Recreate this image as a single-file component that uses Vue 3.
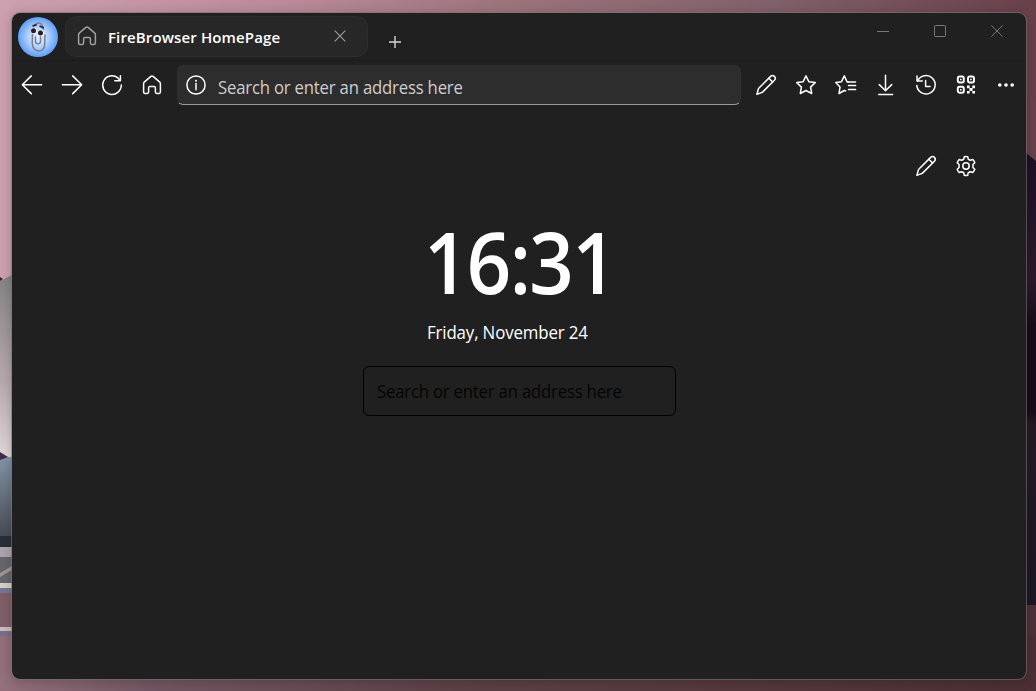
<script setup>
import { ref } from 'vue'

const address = ref('')
const query = ref('')

const navIcons = [
  { name: 'Back', paths: ['M21.6 11.7H2.4M11.3 2.9L2.3 11.7l9 8.900'] },
  { name: 'Forward', paths: ['M2.4 11.7h19.200M12.7 2.9l9 8.800-9 8.900'] },
  { name: 'Refresh', paths: ['M21.3 12A9.3 9.3 0 1 1 17.9 4.9L20 7.3', 'M20.4 2.7v5h-5.6'] },
  {
    name: 'Home',
    paths: ['M3.6 10.8c0-.8.3-1.4.9-1.9l6.4-5.5c.7-.6 1.5-.6 2.2 0l6.4 5.5c.6.5.9 1.1.9 1.9v8.3c0 .8-.5 1.3-1.3 1.3h-2.4c-.8 0-1.3-.5-1.3-1.3v-4.4c0-.8-.5-1.3-1.3-1.3H9.9c-.8 0-1.3.5-1.3 1.3v4.4c0 .8-.5 1.3-1.3 1.3H4.9c-.8 0-1.3-.5-1.3-1.3z']
  }
]

const pencil = ['M3 21.2l1.3-5.1c.1-.5.3-.8.7-1.1L16.6 3.4c1.1-1 2.7-1 3.8 0s1 2.8 0 3.9L8.8 18.9c-.3.3-.7.6-1.1.7L2.8 21.2z', 'M14.8 5.2l3.8 3.8']

const toolIcons = [
  { name: 'Edit', paths: pencil },
  { name: 'Favorite', paths: ['M12 2.9l2.8 5.8 6.4.9-4.6 4.5 1.1 6.4-5.7-3-5.7 3 1.1-6.4-4.6-4.5 6.4-.9z'] },
  { name: 'Favorites list', paths: ['M14 9H21.600M14.5 12.600H21.600M14.5 16.400H21.600', 'M14 9l-1-.3-2.7-5.8-2.8 5.8-5.7.9 4.2 4.5-1 6.400 5.300-3 1.4.4'] },
  { name: 'Downloads', paths: ['M11.5 2.3v15.2M5.3 11.6l6.2 6.1 6.2-6.1M4.6 21.4h14'] },
  { name: 'History', paths: ['M3.6 7.9A9.2 9.2 0 1 1 2.8 12.4', 'M3 2.9v5h5.3', 'M11.6 7.6v5.8H16'] },
  { name: 'QR code', qr: true },
  { name: 'More', dots: true }
]

const gear = 'M10.3 2.7 Q12 2.3 13.7 2.7 L14.2 5.2 Q15.3 5.6 16.4 6.3 L18.8 5.5 Q20.1 6.8 20.8 8.8 L18.9 10.5 Q19.1 12 18.9 13.5 L20.8 15.2 Q20.2 17 18.8 18.5 L16.4 17.7 Q15.4 18.5 14.2 18.8 L13.7 21.3 Q12 21.7 10.3 21.3 L9.8 18.8 Q8.6 18.4 7.6 17.7 L5.2 18.5 Q3.9 17.1 3.2 15.2 L5.1 13.5 Q4.9 12 5.1 10.5 L3.2 8.8 Q3.8 7 5.2 5.5 L7.6 6.3 Q8.6 5.6 9.8 5.2 Z'
</script>

<template>
  <div class="desktop">
    <svg class="wallpaper" viewBox="0 0 1036 691" aria-hidden="true">
      <defs>
        <linearGradient id="sky">
          <stop offset="0" stop-color="#cda0b0" />
          <stop offset=".28" stop-color="#b98a99" />
          <stop offset=".48" stop-color="#9d747c" />
          <stop offset=".75" stop-color="#80606a" />
          <stop offset="1" stop-color="#68404a" />
        </linearGradient>
        <linearGradient id="pillar" x2="0" y2="1">
          <stop offset="0" stop-color="#858282" />
          <stop offset=".55" stop-color="#b6a9ae" />
          <stop offset="1" stop-color="#e4dcdd" />
        </linearGradient>
        <linearGradient id="stone" x2="0" y2="1">
          <stop offset="0" stop-color="#8494a8" />
          <stop offset="1" stop-color="#464b52" />
        </linearGradient>
        <linearGradient id="floor">
          <stop offset="0" stop-color="#93707c" />
          <stop offset=".15" stop-color="#725663" />
          <stop offset=".45" stop-color="#5c4045" />
          <stop offset="1" stop-color="#4b2f35" />
        </linearGradient>
        <linearGradient id="fur" x2="0" y2="1">
          <stop offset="0" stop-color="#1d1025" />
          <stop offset=".28" stop-color="#2c1a2c" />
          <stop offset=".38" stop-color="#190b19" />
          <stop offset=".57" stop-color="#190b18" />
          <stop offset=".6" stop-color="#241a24" />
          <stop offset="1" stop-color="#1c1725" />
        </linearGradient>
      </defs>
      <rect width="1036" height="691" fill="url(#sky)" />
      <rect y="620" width="1036" height="71" fill="url(#floor)" />
      <path d="M0 281l12-6v190H0z" fill="url(#pillar)" />
      <path d="M0 277l3 2-3 2z" fill="#382337" />
      <rect y="457" width="12" height="80" fill="url(#stone)" />
      <path d="M0 452l8 5-8 3z" fill="#412b4d" />
      <rect y="536" width="12" height="11" fill="#282d39" />
      <rect y="547" width="12" height="10" fill="#aaa5aa" />
      <rect y="557" width="12" height="27" fill="#66666c" />
      <path d="M0 573l12-7v4l-12 7z" fill="#a09794" />
      <rect y="583" width="12" height="5" fill="#d4d0c9" />
      <rect y="588" width="12" height="5" fill="#737895" />
      <rect y="593" width="12" height="34" fill="#815f69" />
      <rect y="627" width="12" height="4" fill="#c9bebd" />
      <rect y="631" width="12" height="5" fill="#776f87" />
      <rect x="1024" y="100" width="12" height="60" fill="#68424a" />
      <path d="M1026 153l10 8v444h-10z" fill="url(#fur)" />
      <rect x="1024" y="605" width="12" height="30" fill="#4e3138" />
    </svg>

    <main class="window">
      <header class="titlebar">
        <svg class="avatar" viewBox="0 0 40 40">
          <defs>
            <radialGradient id="glow">
              <stop offset="0" stop-color="#e4efff" />
              <stop offset=".5" stop-color="#b4d2fc" />
              <stop offset="1" stop-color="#5c9ffa" />
            </radialGradient>
          </defs>
          <circle cx="20" cy="20" r="20" fill="url(#glow)" />
          <g fill="none" stroke="#77808f" stroke-width="1.500" stroke-linecap="round">
            <path d="M14.500 17l-.3 9c.2 5 3 8.200 7 8 4-.2 5.600-3.500 5.500-8l.3-8M17.500 20v4.500c.2 3 5 3 5 0v-5M17 8c2-3 6-2.500 7 0l1.500 4" />
          </g>
          <circle cx="15.700" cy="14" r="2.900" fill="#fff" />
          <circle cx="23" cy="16.300" r="2.900" fill="#fff" />
          <circle cx="15.500" cy="13.800" r="2.500" fill="#2b1a20" />
          <circle cx="22.500" cy="16" r="2.500" fill="#2b1a20" />
          <path d="M14.500 9.200l4.200-1.500M21.500 9l4.300 1.800" stroke="#30262c" stroke-width="1.800" />
        </svg>
        <div class="tab">
          <svg class="icon dim" viewBox="0 0 24 24"><path :d="navIcons[3].paths[0]" /></svg>
          <span class="tab-title">FireBrowser HomePage</span>
          <svg class="tab-close" viewBox="0 0 12 12"><path d="M.7.7l10.600 10.600M11.300.7L.7 11.300" /></svg>
        </div>
        <svg class="new-tab" viewBox="0 0 12 12"><path d="M6 0v12M0 6h12" /></svg>
        <div class="caption">
          <svg viewBox="0 0 12 12"><path d="M0 6.500h12" /></svg>
          <svg viewBox="0 0 12 12"><rect x=".5" y=".5" width="11" height="11" rx=".7" /></svg>
          <svg viewBox="0 0 12 12"><path d="M.3.300l11.400 11.400M11.700.300L.3 11.700" /></svg>
        </div>
      </header>

      <nav class="toolbar">
        <div class="group">
          <button v-for="i in navIcons" :key="i.name" :aria-label="i.name">
            <svg class="icon" viewBox="0 0 24 24"><path v-for="p in i.paths" :key="p" :d="p" /></svg>
          </button>
        </div>
        <label class="address">
          <svg class="icon" viewBox="0 0 24 24">
            <circle cx="12" cy="12" r="9.100" />
            <path d="M12 10.500v6.200" />
            <circle class="solid" cx="12" cy="7.800" r="1" />
          </svg>
          <input v-model="address" placeholder="Search or enter an address here" />
        </label>
        <div class="group">
          <button v-for="i in toolIcons" :key="i.name" :aria-label="i.name">
            <svg class="icon" viewBox="0 0 24 24">
              <path v-for="p in i.paths" :key="p" :d="p" />
              <g v-if="i.qr">
                <g class="heavy">
                  <rect x="3.800" y="3.500" width="6" height="6" rx="1.700" />
                  <rect x="14" y="3.500" width="6" height="6" rx="1.700" />
                  <rect x="3.800" y="13.700" width="6" height="6" rx="1.700" />
                </g>
                <path class="solid" d="M6 5.700h1.600v1.600H6zM16.200 5.700h1.600v1.600h-1.600zM6 15.900h1.600v1.600H6zM13 12.600h2.700v2.700H13zM18.300 12.600H21v2.700h-2.700zM15.500 15.100h3v3h-3zM13 17.900h2.700v2.700H13zM18.300 17.900H21v2.700h-2.700z" />
              </g>
              <g v-if="i.dots" class="solid">
                <circle cx="5.800" cy="12" r="1.800" />
                <circle cx="12" cy="12" r="1.800" />
                <circle cx="18.200" cy="12" r="1.800" />
              </g>
            </svg>
          </button>
        </div>
      </nav>

      <section class="home">
        <div class="home-tools">
          <button aria-label="Customize">
            <svg class="icon" viewBox="0 0 24 24"><path v-for="p in pencil" :key="p" :d="p" /></svg>
          </button>
          <button aria-label="Settings">
            <svg class="icon" viewBox="0 0 24 24"><path :d="gear" /><circle cx="12" cy="12" r="3.200" /></svg>
          </button>
        </div>
        <div class="clock">
          <time class="hour">16:31</time>
          <div class="date">Friday, November 24</div>
        </div>
        <label class="search">
          <input v-model="query" placeholder="Search or enter an address here" />
        </label>
      </section>
    </main>
  </div>
</template>

<style>
body { margin: 0; overflow: hidden; }
</style>

<style scoped>
.desktop {
  position: relative;
  box-sizing: border-box;
  width: 1036px;
  height: 691px;
  padding: 12px 9px 11px 11px;
  font-family: "Open Sans", "Noto Sans", sans-serif;
  color: #fff;
}
.wallpaper { position: absolute; inset: 0; width: 100%; height: 100%; }
.window {
  position: relative;
  box-sizing: border-box;
  height: 668px;
  background: #202020;
  background-clip: padding-box;
  border: 1px solid rgba(125, 115, 118, .6);
  border-radius: 9px;
  overflow: hidden;
  box-shadow: 0 2px 12px rgba(0, 0, 0, .2);
}
.titlebar {
  display: flex;
  box-sizing: border-box;
  height: 48px;
  padding: 3px 0 0 6px;
  border-bottom: 1px solid #1c1c1c;
}
.avatar { width: 40px; height: 40px; margin-top: 1px; }
.tab {
  display: flex;
  align-items: center;
  box-sizing: border-box;
  width: 303px;
  height: 41px;
  margin-left: 7px;
  padding: 0 21px 0 9px;
  background: #272727;
  border: 1px solid #2e2e2e;
  border-radius: 11px;
}
.icon {
  display: block;
  width: 24px;
  height: 24px;
  fill: none;
  stroke: #fff;
  stroke-width: 1.5;
  stroke-linecap: round;
  stroke-linejoin: round;
}
.icon.dim { stroke: #a0a0a0; margin-top: -2px; }
.solid { fill: #fff; stroke: none; }
.heavy { stroke-width: 1.9; }
.tab-title { flex: 1; margin-left: 9px; font-size: 15px; font-weight: 600; line-height: 20px; letter-spacing: .13px; white-space: nowrap; }
.tab-close { width: 12px; height: 12px; margin-top: -2px; fill: none; stroke: #a0a0a0; stroke-width: 1.1; }
.new-tab { width: 12px; height: 12px; margin: 20px 0 0 21px; fill: none; stroke: #d6d6d6; stroke-width: 1.4; }
.caption { display: flex; gap: 45px; margin: 9px 23px 0 auto; }
.caption svg { width: 12px; height: 12px; fill: none; stroke: #777; stroke-width: 1; }
.toolbar { display: flex; align-items: center; height: 48px; }
.group { display: flex; }
button { display: grid; place-items: center; width: 40px; height: 40px; padding: 0; border: 0; background: none; }
.address {
  display: flex;
  align-items: center;
  box-sizing: border-box;
  width: 564px;
  height: 40px;
  margin: 0 5px;
  padding-left: 6px;
  background: #2d2d2d;
  border: 1px solid #303030;
  border-bottom-color: #9a9a9a;
  border-radius: 6px;
}
input {
  padding: 0;
  border: 0;
  outline: 0;
  background: none;
  font-family: inherit;
  font-size: 18px;
  letter-spacing: -.2px;
  color: #fff;
  transform: scaleX(.928);
  transform-origin: left;
}
.address input { flex: 1; height: 32px; margin: 3px 0 0 10px; }
.address input::placeholder { color: #cecece; opacity: 1; }
.home { display: flex; flex-direction: column; align-items: center; height: 557px; }
.home-tools { display: flex; align-self: flex-end; margin: 37px 40px 0 0; }
.clock { width: 184px; margin-top: 25px; }
.hour {
  display: block;
  margin-left: -3px;
  font-size: 85px;
  font-weight: 600;
  line-height: 100px;
  letter-spacing: -1.8px;
  white-space: nowrap;
  transform: scaleX(.915);
  transform-origin: left;
}
.date {
  margin-top: 9px;
  font-size: 18px;
  line-height: 24px;
  letter-spacing: -.15px;
  white-space: nowrap;
  transform: scaleX(.937);
  transform-origin: left;
}
.search {
  display: flex;
  align-items: center;
  box-sizing: border-box;
  width: 313px;
  height: 50px;
  margin-top: 22px;
  padding: 0 0 0 13px;
  border: 1px solid #000;
  border-radius: 6px;
}
.search input { width: 290px; height: 32px; }
.search input::placeholder { color: #050505; opacity: 1; }
</style>
